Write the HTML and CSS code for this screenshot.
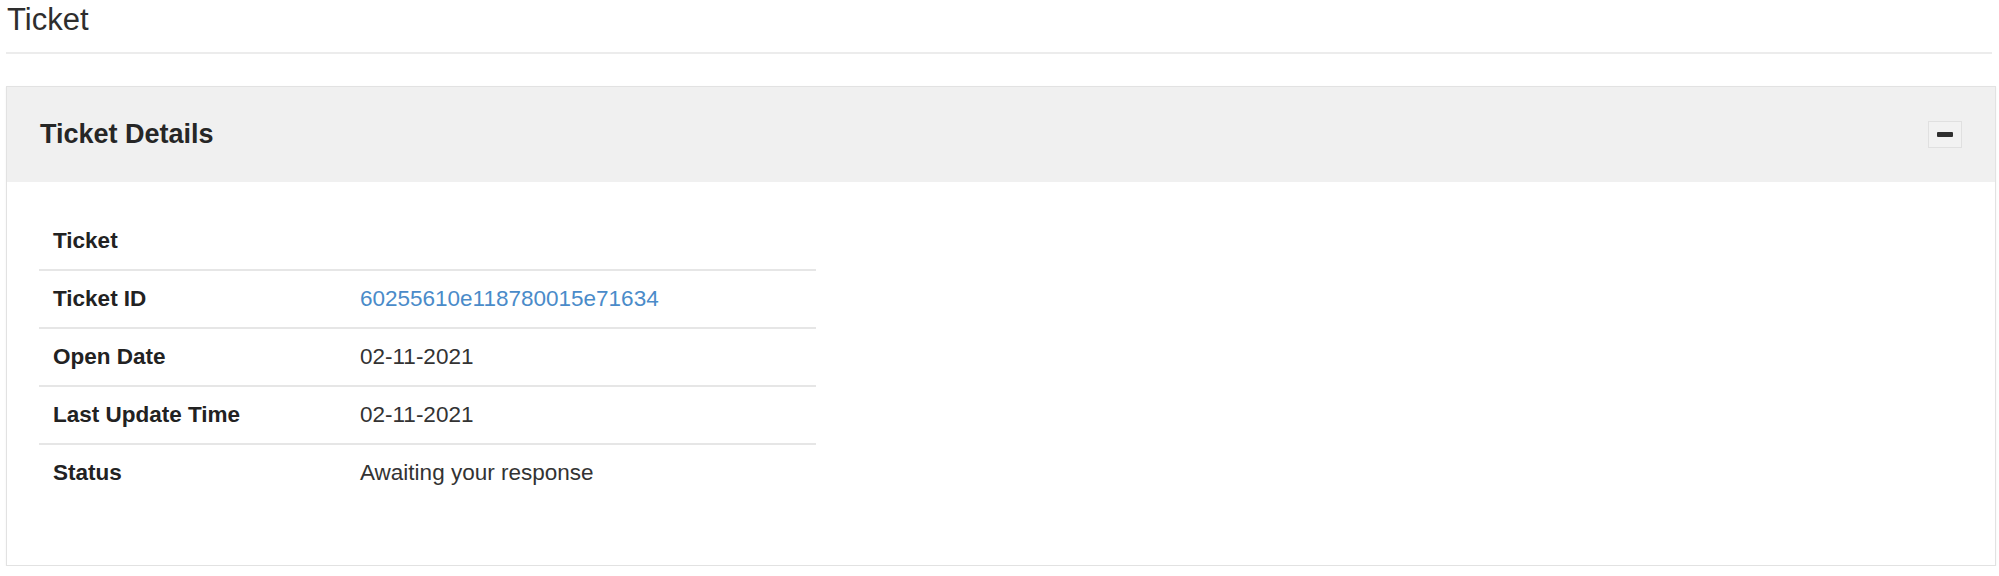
FILE: index.html
```html
<!DOCTYPE html>
<html lang="en">
<head>
    <meta charset="UTF-8">
    <meta name="viewport" content="width=device-width, initial-scale=1.0">
    <title>Ticket</title>
    <link rel="stylesheet" href="styles.css">
</head>
<body>
    <div class="page">
        <h1 class="page-title">Ticket</h1>

        <!-- Ticket details panel -->
        <div class="panel">
            <div class="panel-header">
                <h2>Ticket Details</h2>
                <button class="collapse-btn" aria-label="Collapse"><span class="minus"></span></button>
            </div>
            <div class="panel-body">
                <table class="details-table">
                    <tr>
                        <th>Ticket</th>
                        <td></td>
                    </tr>
                    <tr>
                        <th>Ticket ID</th>
                        <td><a href="#" class="ticket-link">60255610e118780015e71634</a></td>
                    </tr>
                    <tr>
                        <th>Open Date</th>
                        <td>02-11-2021</td>
                    </tr>
                    <tr>
                        <th>Last Update Time</th>
                        <td>02-11-2021</td>
                    </tr>
                    <tr>
                        <th>Status</th>
                        <td>Awaiting your response</td>
                    </tr>
                </table>
            </div>
        </div>
    </div>
</body>
</html>
```

FILE: styles.css
```css
body {
    font-family: "Liberation Sans", Arial, sans-serif;
    margin: 0;
    padding: 0;
    background: #fff;
    color: #333;
}

.page {
    padding: 1px 3px 0 6px;
}

.page-title {
    font-size: 31px;
    font-weight: normal;
    line-height: 38px;
    color: #2e2e2e;
    margin: 0 4px 0 0;
    padding: 0 0 13px 1px;
    border-bottom: 2px solid #ececec;
}

.panel {
    margin-top: 32px;
    border: 1px solid #e2e2e2;
    box-shadow: 0 1px 2px rgba(0, 0, 0, 0.06);
    background: #fff;
}

.panel-header {
    height: 95px;
    background: #f0f0f0;
    display: flex;
    align-items: center;
    justify-content: space-between;
    padding: 0 33px;
}

.panel-header h2 {
    margin: 0;
    font-size: 27px;
    font-weight: bold;
    color: #262626;
}

.collapse-btn {
    width: 34px;
    height: 27px;
    border: 1px solid #e0e0e0;
    background: #f2f2f2;
    padding: 0;
    display: flex;
    align-items: center;
    justify-content: center;
    cursor: pointer;
}

.minus {
    display: block;
    width: 16px;
    height: 5px;
    border-radius: 1px;
    background: #2f2f2f;
}

.panel-body {
    padding: 31px 32px 64px;
}

.details-table {
    width: 777px;
    table-layout: fixed;
    border-collapse: collapse;
    font-size: 22.5px;
}

.details-table tr + tr {
    border-top: 2px solid #e6e6e6;
}

.details-table th,
.details-table td {
    padding: 12px 14px;
    line-height: 32px;
    text-align: left;
    vertical-align: middle;
}

.details-table th {
    width: 279px;
    font-weight: bold;
    color: #222;
}

.details-table td {
    color: #333;
}

.ticket-link {
    color: #4a8bc9;
    text-decoration: none;
}
```
